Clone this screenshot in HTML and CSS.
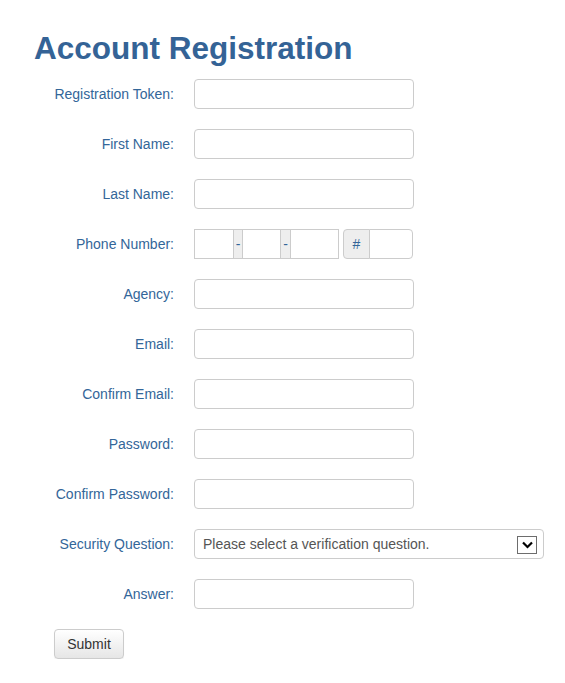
FILE: index.html
```html
<!DOCTYPE html>
<html lang="en">
<head>
<meta charset="utf-8">
<title>Account Registration</title>
<link rel="stylesheet" href="styles.css">
</head>
<body>
<div class="page">
  <h1 class="title">Account Registration</h1>
  <form class="form">
    <div class="row"><label class="label">Registration Token:</label><input class="field" type="text"></div>
    <div class="row"><label class="label">First Name:</label><input class="field" type="text"></div>
    <div class="row"><label class="label">Last Name:</label><input class="field" type="text"></div>
    <div class="row"><label class="label">Phone Number:</label>
      <div class="phone">
        <div class="group">
          <input class="seg seg-a" type="text"><span class="addon addon-dash">-</span><input class="seg seg-b" type="text"><span class="addon addon-dash2">-</span><input class="seg seg-c" type="text">
        </div>
        <div class="group group-ext">
          <span class="addon addon-hash">#</span><input class="seg seg-ext" type="text">
        </div>
      </div>
    </div>
    <div class="row"><label class="label">Agency:</label><input class="field" type="text"></div>
    <div class="row"><label class="label">Email:</label><input class="field" type="text"></div>
    <div class="row"><label class="label">Confirm Email:</label><input class="field" type="text"></div>
    <div class="row"><label class="label">Password:</label><input class="field" type="password"></div>
    <div class="row"><label class="label">Confirm Password:</label><input class="field" type="password"></div>
    <div class="row"><label class="label">Security Question:</label>
      <div class="select-wrap">
        <select class="select"><option>Please select a verification question.</option></select>
        <span class="select-btn"><svg width="11" height="8" viewBox="0 0 11 8"><path d="M1 1.5 L5.5 6 L10 1.5" fill="none" stroke="#000" stroke-width="2.2"/></svg></span>
      </div>
    </div>
    <div class="row"><label class="label">Answer:</label><input class="field" type="text"></div>
    <div class="actions"><button class="submit" type="button">Submit</button></div>
  </form>
</div>
</body>
</html>
```
FILE: styles.css
```css
* { box-sizing: border-box; }
html, body { margin: 0; padding: 0; background: #fff; }
body { font-family: "Liberation Sans", Arial, sans-serif; font-size: 14px; color: #336699; }
.page { padding-left: 34px; padding-top: 30px; }
.title {
  margin: 0 0 13px 0;
  font-size: 31.5px;
  line-height: 36px;
  font-weight: bold;
  color: #346396;
}
.form { margin: 0; }
.row { display: flex; align-items: center; margin-bottom: 20px; height: 30px; }
.label { width: 140px; text-align: right; margin-right: 20px; color: #336699; font-size: 14px; }
.field {
  width: 220px; height: 30px;
  border: 1px solid #ccc; border-radius: 4px;
  padding: 4px 8px; font: inherit; color: #555; background: #fff;
  outline: none;
}
.phone { display: flex; align-items: center; }
.group { display: flex; height: 30px; }
.group-ext { margin-left: 4px; }
.seg, .addon {
  height: 30px; border: 1px solid #ccc; background: #fff;
  font: inherit; padding: 0; outline: none;
}
.seg + .addon, .addon + .seg { margin-left: -1px; }
.addon {
  background: #eee; color: #336699; display: flex; align-items: center; justify-content: center;
  font-size: 14px;
}
.seg-a { width: 40px; }
.addon-dash { width: 10px; }
.seg-b { width: 39px; }
.addon-dash2 { width: 11px; }
.seg-c { width: 49px; }
.addon-hash { width: 27px; border-radius: 4px 0 0 4px; }
.seg-ext { width: 44px; border-radius: 0 4px 4px 0; }
.select-wrap { position: relative; width: 350px; height: 30px; }
.select {
  -webkit-appearance: none; appearance: none;
  width: 350px; height: 30px;
  border: 1px solid #ccc; border-radius: 4px;
  background: #fff; color: #555;
  font: inherit; font-size: 14px; padding: 0 0 0 8px; outline: none;
}
.select-btn {
  position: absolute; left: 323px; top: 7px;
  width: 20px; height: 18px;
  border: 1px solid #6d6d6d; background: #fff;
  display: flex; align-items: center; justify-content: center;
  pointer-events: none;
}
.actions { padding-left: 20px; }
.submit {
  width: 70px; height: 30px;
  border: 1px solid #ccc; border-radius: 4px;
  background: linear-gradient(#ffffff, #e6e6e6);
  box-shadow: 0 1px 1px rgba(0,0,0,0.06);
  color: #333; font: inherit; font-size: 14px; padding: 0;
}
```
